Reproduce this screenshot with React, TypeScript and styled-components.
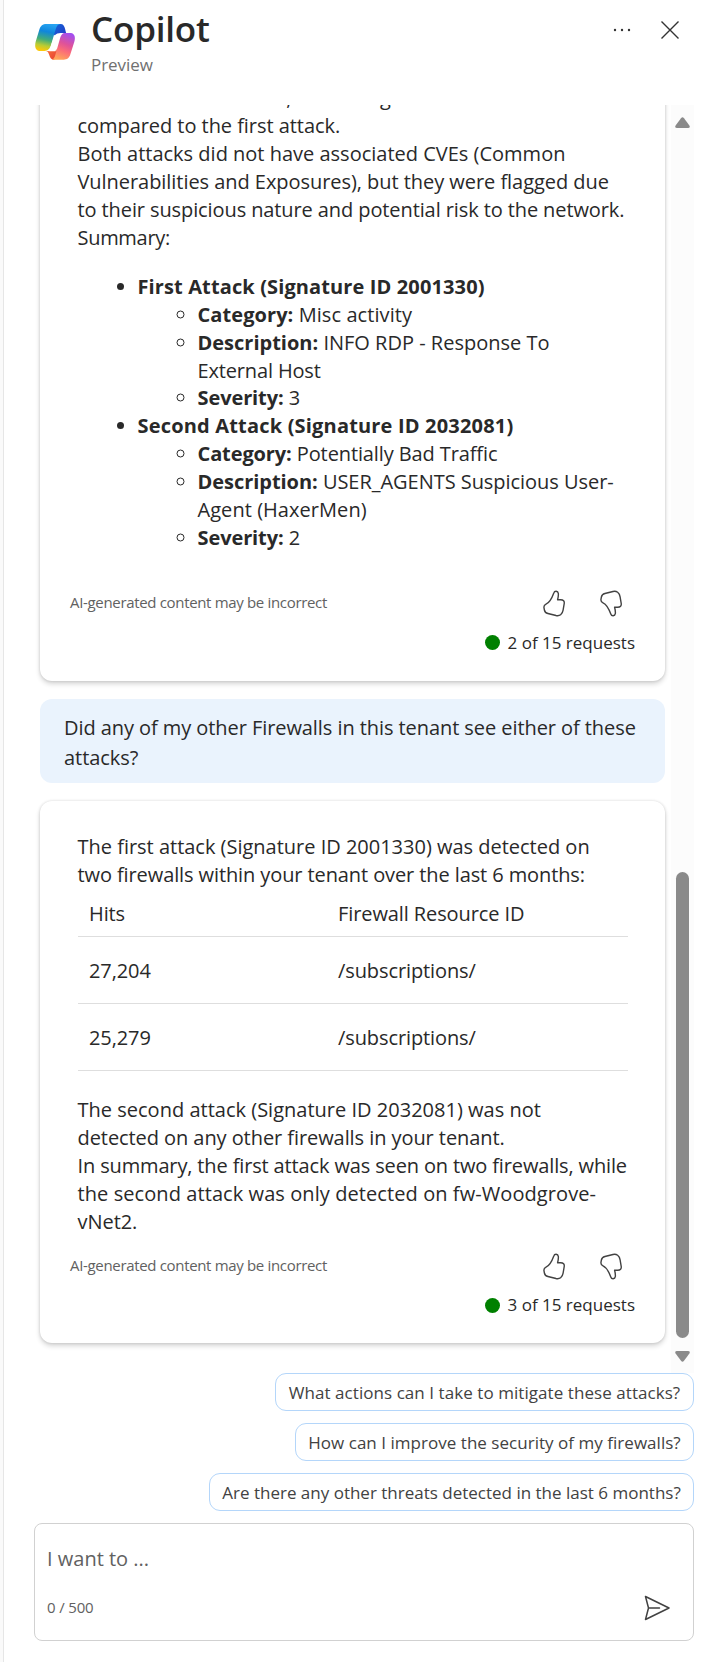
import React from 'react';
import styled, { createGlobalStyle } from 'styled-components';

const GlobalStyle = createGlobalStyle`
  * { box-sizing: border-box; }
  body {
    margin: 0;
    background: #fff;
    color: #292929;
    font-family: "Segoe UI", "Open Sans", "Noto Sans", sans-serif;
    font-size: 20px;
    line-height: 28px;
  }
`;

const Panel = styled.main`
  display: flex;
  flex-direction: column;
  width: 718px;
  height: 1662px;
  padding: 0 24px 21px 30px;
  border-left: 3px solid #fafafa;
  box-shadow: inset 1px 0 0 #e6e6e6;
  overflow: hidden;
`;

const Header = styled.header`
  display: flex;
  height: 105px;
  flex: none;
  padding: 0 15px 0 2px;
`;

const Logo = styled.svg`
  width: 40px;
  height: 36px;
  margin-top: 24px;
`;

const Titles = styled.div`
  flex: 1;
  margin-left: 16px;
  padding-top: 4px;
`;

const Title = styled.h1`
  margin: 0;
  font-size: 35px;
  font-weight: 600;
  line-height: 50px;
  letter-spacing: -0.2px;
`;

const Subtitle = styled.div`
  margin-top: -1px;
  font-size: 17px;
  line-height: 24px;
  color: #707070;
  letter-spacing: -0.05px;
`;

const HeaderActions = styled.div`
  display: flex;
  gap: 30px;
  padding-top: 20px;
`;

const IconButton = styled.button`
  display: flex;
  padding: 0;
  border: 0;
  height: max-content;
  background: none;
  color: #333;
`;

const Viewport = styled.section`
  display: flex;
  height: 1268px;
  flex: none;
  overflow: hidden;
`;

const Messages = styled.div`
  display: flex;
  flex: 1;
  flex-direction: column;
  justify-content: flex-end;
  gap: 18px;
  padding: 0 6px 30px 7px;
`;

const Card = styled.article`
  flex: none;
  border-radius: 12px;
  background: #fff;
  box-shadow: 0 0 3px rgba(0, 0, 0, 0.14), 0 3px 5px rgba(0, 0, 0, 0.16);
  padding: 32px 30px 26px;
`;

const Body = styled.div`
  padding-left: 7.5px;
`;

const Line = styled.div<{ $track?: number }>`
  white-space: nowrap;
  letter-spacing: ${(p) => p.$track ?? -0.05}px;
`;

const List = styled.ul<{ $nested?: boolean }>`
  margin: ${(p) => (p.$nested ? '0' : '21px 0 0')};
  padding-left: 60px;
  line-height: 27.85px;
  list-style-type: ${(p) => (p.$nested ? 'circle' : 'disc')};
`;

const Footer = styled.footer<{ $gap: number }>`
  margin-top: ${(p) => p.$gap}px;
`;

const Feedback = styled.div`
  display: flex;
  align-items: center;
  height: 28px;
  padding-right: 12px;
  font-size: 15px;
  color: #616161;
`;

const Disclaimer = styled.span`
  flex: 1;
  padding-bottom: 3px;
  letter-spacing: -0.33px;
`;

const Thumbs = styled.div`
  display: flex;
  gap: 34px;
`;

const Requests = styled.div`
  display: flex;
  justify-content: flex-end;
  align-items: center;
  gap: 8px;
  margin-top: 13px;
  height: 24px;
  font-size: 17px;
`;

const StatusDot = styled.i`
  width: 15px;
  height: 15px;
  border-radius: 50%;
  background: #008000;
`;

const Question = styled.div`
  flex: none;
  height: 84px;
  padding: 14px 24px 10px;
  border-radius: 12px;
  background: #eaf3fd;
  line-height: 30px;
`;

const Table = styled.table`
  width: 550px;
  margin: 4px 0 25px 0.5px;
  border-collapse: collapse;
  table-layout: fixed;
  letter-spacing: -0.1px;
`;

const Cell = styled.td<{ $head?: boolean; $narrow?: boolean }>`
  width: ${(p) => (p.$narrow ? '249px' : 'auto')};
  height: ${(p) => (p.$head ? 44 : 67)}px;
  padding: ${(p) => (p.$head ? 0 : 1)}px 11px 0;
  border-bottom: 1px solid #dedede;
`;

const ScrollTrack = styled.div`
  display: flex;
  flex-direction: column;
  align-items: center;
  width: 23px;
  padding: 12px 0 11px;
  background: #fcfcfc;
`;

const ScrollThumb = styled.div`
  width: 13px;
  height: 466px;
  margin: auto 0 13px;
  border-radius: 7px;
  background: #8a8a8a;
`;

const Suggestions = styled.div`
  display: flex;
  flex-direction: column;
  align-items: flex-end;
  gap: 12px;
`;

const Chip = styled.button<{ $width: number; $track?: number }>`
  width: ${(p) => p.$width}px;
  height: 38px;
  padding: 1px 0 0;
  border: 1px solid #b4d6fa;
  border-radius: 11px;
  background: #fff;
  color: #424242;
  font: inherit;
  font-size: 17px;
  letter-spacing: ${(p) => p.$track ?? 0}px;
  white-space: nowrap;
`;

const Composer = styled.div`
  display: flex;
  flex-direction: column;
  justify-content: space-between;
  height: 118px;
  margin: 12px 0 0 1px;
  padding: 21px 23px 19px 12px;
  border: 1px solid #d1d1d1;
  border-radius: 8px;
  color: #616161;
`;

const ComposerBar = styled.div`
  display: flex;
  justify-content: space-between;
  align-items: center;
  height: 26px;
  font-size: 15px;
  letter-spacing: -0.15px;
`;

const Counter = styled.span`
  padding-bottom: 2px;
`;

function CopilotLogo() {
  return (
    <Logo viewBox="15 27 121 107" preserveAspectRatio="none">
      <defs>
        <linearGradient id="sea" x1="0.6" y1="0" x2="0.4" y2="1">
          <stop offset="0" stopColor="#27a4f2" />
          <stop offset="0.3" stopColor="#0f86dc" />
          <stop offset="0.6" stopColor="#43ad79" />
          <stop offset="0.82" stopColor="#b9cc33" />
          <stop offset="1" stopColor="#fbc80b" />
        </linearGradient>
        <linearGradient id="sunset" x1="0.7" y1="0" x2="0.35" y2="1">
          <stop offset="0" stopColor="#a34ef0" />
          <stop offset="0.4" stopColor="#df5299" />
          <stop offset="0.65" stopColor="#fb6c78" />
          <stop offset="1" stopColor="#ffa658" />
        </linearGradient>
        <linearGradient id="deep" x1="0" y1="0" x2="1" y2="1">
          <stop offset="0" stopColor="#1468d8" />
          <stop offset="1" stopColor="#2434c4" />
        </linearGradient>
        <linearGradient id="ember" x1="0" y1="0" x2="1" y2="1">
          <stop offset="0" stopColor="#f9823a" />
          <stop offset="1" stopColor="#e83a34" />
        </linearGradient>
      </defs>
      <path fill="url(#deep)" d="M74 27H92C101 27 104 33 106 42L109 54H98C88 54 85 60 82 68L72 58Z" />
      <path fill="url(#ember)" d="M45 107H60C68 107 72 103 76 92L84 116L73 133C64 133 61 128 58 119C55 111 54 107 45 107Z" />
      <path fill="url(#sea)" d="M50 27H92C84 27 80 34 77 44L64 88C60 101 54 107 44 107H32C17 107 13 96 17 80L28 44C32 32 38 27 50 27Z" />
      <path fill="#fff" d="M74 62C78 56 86 54 94 54H108L90 72L77 108H56C60 104 62 97 64 88Z" />
      <path fill="url(#sunset)" d="M106 54H120C135 54 138 65 134 80L122 117C118 129 112 133 102 133H66C72 132 75 125 77 117L90 72C94 59 98 54 106 54Z" />
    </Logo>
  );
}

const THUMB =
  'M10.8 3C11.5.6 14.9.6 15.3 3.3C15.6 5.2 15.2 7.4 14.6 9.7H17.6C20.4 9.7 21.6 11.2 21.2 13.6L20.1 20.2C19.4 24.4 16.6 26.3 13 25.5L4.9 23.5C2.8 23 1.8 22 1.4 20L1 17.8C.7 16 1.4 14.9 3 14.2C6.6 12.6 8.4 9.6 10.8 3Z';

function ThumbIcon({ down = false }: { down?: boolean }) {
  return (
    <svg width="23" height="27" viewBox="0 0 23 27" fill="none" stroke="#424242" strokeWidth="1.4" strokeLinejoin="round">
      <path d={THUMB} transform={down ? 'matrix(1 0 0 -1 0 27)' : undefined} />
    </svg>
  );
}

function CardFooter({ count, gap }: { count: number; gap: number }) {
  return (
    <Footer $gap={gap}>
      <Feedback>
        <Disclaimer>AI-generated content may be incorrect</Disclaimer>
        <Thumbs>
          <IconButton aria-label="Like"><ThumbIcon /></IconButton>
          <IconButton aria-label="Dislike"><ThumbIcon down /></IconButton>
        </Thumbs>
      </Feedback>
      <Requests>
        <StatusDot />
        <span>{count} of 15 requests</span>
      </Requests>
    </Footer>
  );
}

function Arrow({ down = false }: { down?: boolean }) {
  return (
    <svg width="15" height="11" viewBox="0 0 15 11" fill="#8a8a8a">
      <path
        transform={down ? 'matrix(1 0 0 -1 0 11)' : undefined}
        d="M6 1.2Q7.5-.6 9 1.2L14.4 8.4Q15.6 11 13 11H2Q-.6 11 .6 8.4Z"
      />
    </svg>
  );
}

export default function App() {
  return (
    <>
      <GlobalStyle />
      <Panel>
        <Header>
          <CopilotLogo />
          <Titles>
            <Title>Copilot</Title>
            <Subtitle>Preview</Subtitle>
          </Titles>
          <HeaderActions>
            <IconButton aria-label="More">
              <svg width="18" height="20" viewBox="0 0 18 20" fill="#333">
                <circle cx="2" cy="10" r="1.2" />
                <circle cx="9" cy="10" r="1.2" />
                <circle cx="16" cy="10" r="1.2" />
              </svg>
            </IconButton>
            <IconButton aria-label="Close">
              <svg width="18" height="20" viewBox="0 0 18 20" stroke="#333" strokeWidth="1.4">
                <path d="M.5 1.5L17.5 18.5M17.5 1.5L.5 18.5" />
              </svg>
            </IconButton>
          </HeaderActions>
        </Header>

        <Viewport>
          <Messages>
            <Card>
              <Body>
                <Line $track={0.33}>The attack had level 2, indicating a more severe threat</Line>
                <Line>compared to the first attack.</Line>
                <Line $track={0}>Both attacks did not have associated CVEs (Common</Line>
                <Line $track={-0.05}>Vulnerabilities and Exposures), but they were flagged due</Line>
                <Line $track={-0.1}>to their suspicious nature and potential risk to the network.</Line>
                <Line $track={-0.3}>Summary:</Line>
                <List>
                  <li>
                    <Line $track={0.12}><b>First Attack (Signature ID 2001330)</b></Line>
                    <List $nested>
                      <li><Line $track={0.08}><b>Category:</b> Misc activity</Line></li>
                      <li>
                        <Line $track={0}><b>Description:</b> INFO RDP - Response To</Line>
                        <Line $track={-0.15}>External Host</Line>
                      </li>
                      <li><Line $track={-0.1}><b>Severity:</b> 3</Line></li>
                    </List>
                  </li>
                  <li>
                    <Line $track={0.18}><b>Second Attack (Signature ID 2032081)</b></Line>
                    <List $nested>
                      <li><Line $track={-0.11}><b>Category:</b> Potentially Bad Traffic</Line></li>
                      <li>
                        <Line $track={-0.04}><b>Description:</b> USER_AGENTS Suspicious User-</Line>
                        <Line $track={0.05}>Agent (HaxerMen)</Line>
                      </li>
                      <li><Line $track={-0.1}><b>Severity:</b> 2</Line></li>
                    </List>
                  </li>
                </List>
              </Body>
              <CardFooter count={2} gap={38} />
            </Card>

            <Question>
              <Line $track={-0.07}>Did any of my other Firewalls in this tenant see either of these</Line>
              <Line>attacks?</Line>
            </Question>

            <Card>
              <Body>
                <Line $track={-0.01}>The first attack (Signature ID 2001330) was detected on</Line>
                <Line $track={-0.1}>two firewalls within your tenant over the last 6 months:</Line>
                <Table>
                  <tbody>
                    <tr><Cell $head $narrow>Hits</Cell><Cell $head>Firewall Resource ID</Cell></tr>
                    <tr><Cell>27,204</Cell><Cell>/subscriptions/</Cell></tr>
                    <tr><Cell>25,279</Cell><Cell>/subscriptions/</Cell></tr>
                  </tbody>
                </Table>
                <Line $track={0.01}>The second attack (Signature ID 2032081) was not</Line>
                <Line $track={-0.07}>detected on any other firewalls in your tenant.</Line>
                <Line $track={-0.14}>In summary, the first attack was seen on two firewalls, while</Line>
                <Line $track={0.08}>the second attack was only detected on fw-Woodgrove-</Line>
                <Line>vNet2.</Line>
              </Body>
              <CardFooter count={3} gap={16} />
            </Card>
          </Messages>
          <ScrollTrack>
            <Arrow />
            <ScrollThumb />
            <Arrow down />
          </ScrollTrack>
        </Viewport>

        <Suggestions>
          <Chip $width={419} $track={0.06}>What actions can I take to mitigate these attacks?</Chip>
          <Chip $width={399} $track={0.03}>How can I improve the security of my firewalls?</Chip>
          <Chip $width={485}>Are there any other threats detected in the last 6 months?</Chip>
        </Suggestions>

        <Composer>
          <Line $track={0}>I want to ...</Line>
          <ComposerBar>
            <Counter>0 / 500</Counter>
            <IconButton aria-label="Send">
              <svg width="26" height="26" viewBox="0 0 26 26" fill="none" stroke="#424242" strokeWidth="1.5" strokeLinejoin="round" strokeLinecap="round">
                <path d="M1.5 1.5L25 13L1.5 24.5L4.5 13ZM4.5 13H15.5" />
              </svg>
            </IconButton>
          </ComposerBar>
        </Composer>
      </Panel>
    </>
  );
}
